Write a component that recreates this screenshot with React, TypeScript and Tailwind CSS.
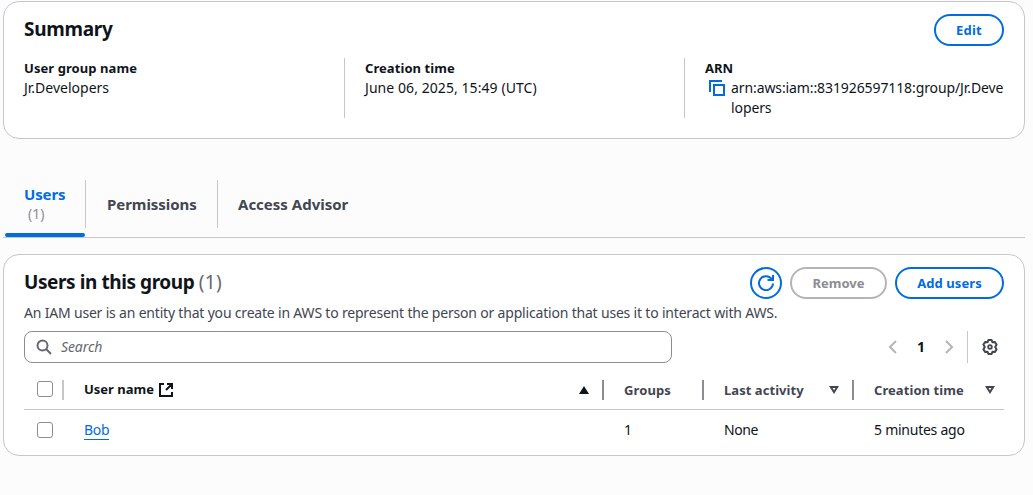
import React from "react";

type IconProps = { d: string; className?: string; fill?: boolean; w?: number };

function Icon({ d, className = "", fill = false, w = 2 }: IconProps) {
  return (
    <svg viewBox="0 0 16 16" className={`block h-4 w-4 shrink-0 ${className}`} fill={fill ? "currentColor" : "none"} stroke="currentColor" strokeWidth={w} strokeLinejoin="miter">
      <path d={d} />
    </svg>
  );
}

function GearIcon() {
  return (
    <svg viewBox="0 0 16 16" className="ml-3.5 block h-4 w-4 shrink-0 text-[#424650]" fill="none" stroke="currentColor" strokeWidth={2} strokeLinejoin="round">
      <path d="M6.4 1H9.6L10.4 3.2L12.7 2.9L14.6 5.6L13.2 8L14.6 10.4L12.7 13.1L10.4 12.8L9.6 15H6.4L5.6 12.8L3.3 13.1L1.4 10.4L2.8 8L1.4 5.6L3.3 2.9L5.6 3.2Z" />
      <circle cx="8" cy="8" r="1.8" strokeWidth={1.8} />
    </svg>
  );
}

function Divider({ className }: { className: string }) {
  return <span className={`block h-5 w-0.5 shrink-0 ${className}`} />;
}

function Checkbox({ className = "" }: { className?: string }) {
  return <span role="checkbox" aria-checked="false" className={`block h-4 w-4 shrink-0 rounded-[3px] border border-[#8c8c94] bg-white ${className}`} />;
}

function Summary() {
  return (
    <section className="h-[138px] rounded-2xl border border-[#c6c6cd] bg-white px-5 pt-3">
      <div className="flex h-8 items-center justify-between">
        <h2 className="pb-0.5 text-[19px] leading-6 font-bold tracking-[-0.3px]">Summary</h2>
        <button className="h-8 w-[70px] rounded-full border-2 border-[#006ce0] text-[13px] font-bold tracking-[0.2px] text-[#006ce0]">Edit</button>
      </div>
      <div className="mt-3 flex h-[60px]">
        <div className="w-80">
          <div className="text-[13px] leading-5 font-bold tracking-[0.07px]">User group name</div>
          <div>Jr.Developers</div>
        </div>
        <div className="w-[340px] border-l border-[#c6c6cd] pl-5">
          <div className="text-[13px] leading-5 font-bold tracking-[0.07px]">Creation time</div>
          <div className="tracking-[0.07px]">June 06, 2025, 15:49 (UTC)</div>
        </div>
        <div className="min-w-0 flex-1 border-l border-[#c6c6cd] pl-5">
          <div className="text-[13px] leading-5 font-bold">ARN</div>
          <div className="flex pl-1">
            <Icon className="mt-0.5 text-[#006ce0]" d="M1 12V1H13 M5 5H15V15H5Z" />
            <div className="ml-1.5 tracking-[-0.1px] whitespace-nowrap">
              arn:aws:iam::831926597118:group/Jr.Deve
              <br />
              lopers
            </div>
          </div>
        </div>
      </div>
    </section>
  );
}

function Tabs() {
  return (
    <nav className="mt-[41px] flex h-[58px] border-b border-[#c6c6cd] text-[15px] font-bold text-[#424650]">
      <div className="flex w-[83px] flex-col pl-0.5">
        <div className="h-12 w-[81px] border-r border-[#c6c6cd] pt-1 pl-[19px] leading-5 text-[#006ce0]">
          <div className="tracking-[-0.15px]">Users</div>
          <div className="pl-1 text-[14px] font-normal text-[#8c8c94]">(1)</div>
        </div>
        <div className="mt-[5px] h-1 w-20 rounded-sm bg-[#006ce0]" />
      </div>
      <div className="flex h-12 w-[132px] items-center border-r border-[#c6c6cd] pl-[21px] tracking-[-0.05px]">Permissions</div>
      <div className="flex h-12 items-center pl-5">Access Advisor</div>
    </nav>
  );
}

function UsersTable() {
  return (
    <div className="mt-[10px]">
      <div className="flex h-[37px] items-center border-b border-[#c6c6cd] pb-[3px] text-[13px] font-bold text-[#424650]">
        <div className="flex w-10 items-center pl-[13px]">
          <Checkbox className="mb-0.5" />
          <Divider className="ml-[9px] bg-[#c6c6cd]" />
        </div>
        <div className="flex w-[540px] items-center pl-5 text-[#0f141a]">
          <span className="mb-0.5 w-[70px] whitespace-nowrap">User name</span>
          <Icon className="ml-1" d="M6 2H2V14H14V10 M9 2H14V7 M14 2L8 8" />
          <Icon className="ml-auto mr-[10px]" fill w={0} d="M8 4L13 12H3Z" />
          <Divider className="bg-[#8c8c94]" />
        </div>
        <div className="flex w-[100px] items-center justify-between pl-5">
          <span className="tracking-[0.1px]">Groups</span>
          <Divider className="bg-[#8c8c94]" />
        </div>
        <div className="flex w-[150px] items-center pl-5">
          <span className="tracking-[0.05px]">Last activity</span>
          <Icon className="ml-auto mr-[10px]" d="M4.8 5H11.2L8 10.2Z" />
          <Divider className="bg-[#8c8c94]" />
        </div>
        <div className="flex flex-1 items-center justify-between pr-1.5 pl-5">
          <span className="tracking-[0.07px]">Creation time</span>
          <Icon d="M4.8 5H11.2L8 10.2Z" />
        </div>
      </div>
      <div className="flex h-10 items-center">
        <div className="w-10 pl-[13px]"><Checkbox /></div>
        <div className="w-[540px] pl-5">
          <a className="inline-block border-b border-[#006ce0] leading-[18px] tracking-[-0.3px] text-[#006ce0]">Bob</a>
        </div>
        <div className="w-[100px] pl-5">1</div>
        <div className="w-[150px] pl-5 tracking-[-0.4px]">None</div>
        <div className="pl-5 tracking-[-0.25px]">5 minutes ago</div>
      </div>
    </div>
  );
}

function UsersPanel() {
  return (
    <section className="mt-4 h-[202px] rounded-2xl border border-[#c6c6cd] bg-white px-5 pt-3">
      <div className="flex h-8 items-center">
        <h2 className="flex-1 pb-0.5 text-[19px] leading-6 font-bold tracking-[-0.42px]">
          Users in this group <span className="font-normal tracking-[0.3px] text-[#656871]">(1)</span>
        </h2>
        <button className="flex h-8 w-8 items-center justify-center rounded-full border-2 border-[#006ce0] text-[#006ce0]">
          <Icon d="M15 8.5A7 7 0 1 1 13.8 4.2 M9.5 5H15V0" />
        </button>
        <button className="ml-2 h-8 w-[97px] rounded-full border-2 border-[#b4b4bb] text-[13px] font-bold text-[#8c8c94]">Remove</button>
        <button className="ml-2 h-8 w-[109px] rounded-full border-2 border-[#006ce0] text-[13px] font-bold tracking-[0.07px] text-[#006ce0]">Add users</button>
      </div>
      <p className="mt-1 tracking-[-0.19px] whitespace-nowrap text-[#424650]">An IAM user is an entity that you create in AWS to represent the person or application that uses it to interact with AWS.</p>
      <div className="mt-2 flex h-8 items-center">
        <div className="flex h-8 w-[648px] items-center rounded-lg border border-[#8c8c94] pl-[11px]">
          <Icon className="text-[#656871]" d="M11.5 6.5A5 5 0 1 1 1.5 6.5A5 5 0 1 1 11.5 6.5 M10.5 10.5L15 15" />
          <span className="ml-[9px] italic tracking-[-0.1px] text-[#656871]">Search</span>
        </div>
        <Icon className="ml-[213px] text-[#b4b4bb]" d="M11 2L5 8L11 14" />
        <span className="w-10 text-center font-bold">1</span>
        <Icon className="text-[#b4b4bb]" d="M5 2L11 8L5 14" />
        <span className="ml-2.5 h-8 border-l border-[#c6c6cd]" />
        <GearIcon />
      </div>
      <UsersTable />
    </section>
  );
}

export default function App() {
  return (
    <main className="h-[495px] w-[1033px] overflow-hidden bg-[#fcfcfd] pt-px pr-2 pl-[3px] font-['Noto_Sans',sans-serif] text-[14px] leading-5 text-[#0f141a]">
      <Summary />
      <Tabs />
      <UsersPanel />
    </main>
  );
}
